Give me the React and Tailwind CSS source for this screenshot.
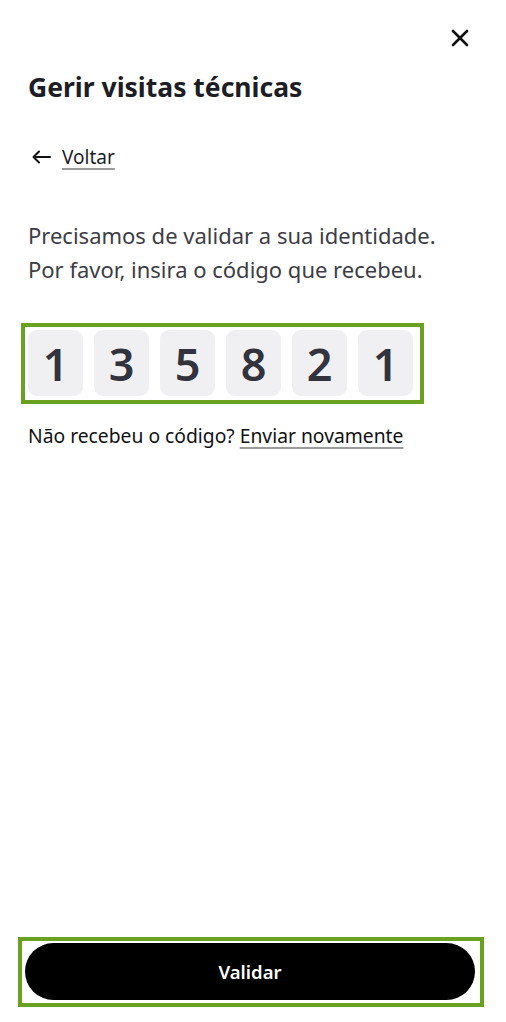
import React from "react";

export default function App() {
  const digits = ["1", "3", "5", "8", "2", "1"];
  return (
    <div className="w-[506px] h-[1022px] bg-white flex flex-col" style={{ fontFamily: "'Noto Sans', sans-serif" }}>
      <div className="flex justify-end pt-[29px] pr-[37px]">
        <svg width="18" height="18" viewBox="0 0 18 18" fill="none" stroke="#111" strokeWidth="2.6" strokeLinecap="round">
          <path d="M2 2 L16 16" />
          <path d="M16 2 L2 16" />
        </svg>
      </div>
      <h1 className="mt-[23px] ml-[28px] text-[26.5px] leading-[34px] font-bold text-[#1d1d24]">
        Gerir visitas técnicas
      </h1>
      <div className="mt-[40px] ml-[32px] flex items-center gap-[11px] text-[19px] leading-[26px] text-[#1d1d24]">
        <svg width="19" height="14" viewBox="0 0 19 14" fill="none" stroke="#111" strokeWidth="2" strokeLinecap="round" strokeLinejoin="round">
          <path d="M18 7 H2" />
          <path d="M7 1.5 L1.5 7 L7 12.5" />
        </svg>
        <span className="underline decoration-[#9a9a9a] underline-offset-[4px] decoration-[1.5px]">Voltar</span>
      </div>
      <p className="mt-[48px] ml-[28px] text-[22px] leading-[34px] text-[#3d3d44]">
        Precisamos de validar a sua identidade.
        <br />
        Por favor, insira o código que recebeu.
      </p>
      <div className="mt-[37px] ml-[21px] w-[403px] h-[81px] border-[4px] border-[#6aa121] pl-[3px] pt-[3px] flex gap-[11px]">
        {digits.map((d, i) => (
          <div key={i} className="w-[55px] h-[66px] rounded-[9px] bg-[#f0f0f3] flex items-center justify-center text-[45px] leading-none font-semibold text-[#33333d]">
            {d}
          </div>
        ))}
      </div>
      <p className="mt-[19px] ml-[28px] text-[19.3px] leading-[26px] text-[#111]">
        Não recebeu o código?{" "}
        <span className="underline decoration-[#9a9a9a] underline-offset-[4px] decoration-[1.5px]">Enviar novamente</span>
      </p>
      <div className="flex-1" />
      <div className="mb-[15px] ml-[18px] w-[466px] h-[70px] border-[4px] border-[#6aa121] px-[3px] pt-[2px]">
        <button className="w-[450px] h-[57px] rounded-full bg-black text-white text-[18.5px] font-semibold flex items-center justify-center">
          Validar
        </button>
      </div>
    </div>
  );
}
